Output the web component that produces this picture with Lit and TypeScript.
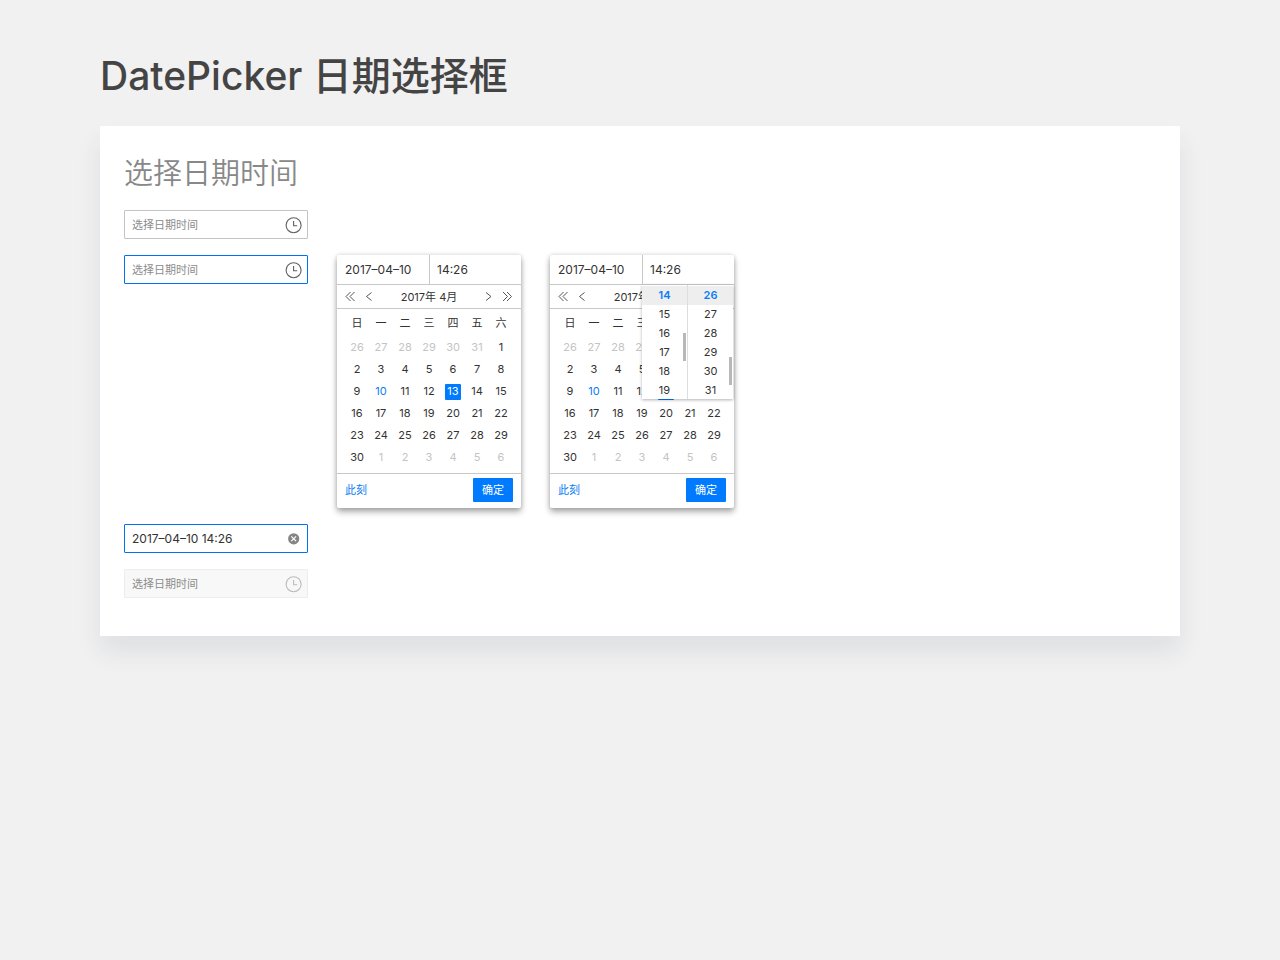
import { LitElement, html, css, svg, nothing } from "lit";
import { customElement, property, state } from "lit/decorators.js";
import { classMap } from "lit/directives/class-map.js";

const WEEKDAYS = ["日", "一", "二", "三", "四", "五", "六"];

interface Day {
  value: number;
  outside: boolean;
}

/** Weeks of April 2017, padded with the neighbouring months. */
function buildWeeks(): Day[][] {
  const days: Day[] = [];
  for (let d = 26; d <= 31; d++) days.push({ value: d, outside: true });
  for (let d = 1; d <= 30; d++) days.push({ value: d, outside: false });
  for (let d = 1; days.length < 42; d++) days.push({ value: d, outside: true });
  return Array.from({ length: 6 }, (_, i) => days.slice(i * 7, i * 7 + 7));
}

const clockIcon = html`<svg class="clock" viewBox="0 0 18 18" aria-hidden="true">
  <circle cx="8.6" cy="9.2" r="7.5"></circle>
  <path d="M8.6 5V9.8H12.2"></path>
</svg>`;

const clearIcon = html`<svg class="clear" viewBox="0 0 12 12" aria-hidden="true">
  <circle cx="5.7" cy="5.8" r="5.6"></circle>
  <path d="M3.3 3.4L8.1 8.2M8.1 3.4L3.3 8.2"></path>
</svg>`;

const chevrons = {
  prevYear: svg`<path d="M5.5 1L1 5.5L5.5 10M9.5 1L5 5.5L9.5 10"></path>`,
  prev: svg`<path d="M7.5 1.5L2.5 5.5L7.5 9.5"></path>`,
  next: svg`<path d="M3 1.5L8 5.5L3 9.5"></path>`,
  nextYear: svg`<path d="M1 1L5.5 5.5L1 10M5 1L9.5 5.5L5 10"></path>`,
};

const base = css`
  *,
  *::before,
  *::after {
    box-sizing: border-box;
  }
  button,
  input {
    margin: 0;
    padding: 0;
    border: 0;
    outline: 0;
    background: none;
    font: inherit;
    color: inherit;
    min-width: 0;
  }
  button {
    cursor: pointer;
  }
`;

@customElement("date-field")
class DateField extends LitElement {
  @property() value = "";
  @property({ type: Boolean }) active = false;
  @property({ type: Boolean }) disabled = false;

  static styles = [
    base,
    css`
      :host {
        display: block;
      }
      .field {
        display: flex;
        align-items: center;
        height: 29px;
        padding: 0 4px 0 7px;
        border: 1px solid #c4c4c4;
        border-radius: 1px;
        background: #fff;
      }
      .field.active {
        border-color: #0070f5;
      }
      .field.disabled {
        border-color: #ededed;
        background: #f8f8f8;
      }
      .input {
        flex: 1;
        font-size: 12px;
        color: #333;
      }
      .input::placeholder {
        font-size: 11px;
        color: #8c8c8c;
        opacity: 1;
      }
      .icon {
        display: flex;
        justify-content: center;
        width: 18px;
      }
      .clock {
        width: 18px;
        height: 18px;
        fill: none;
        stroke: #606060;
        stroke-width: 1.1;
      }
      .disabled .clock {
        stroke: #bcbcbc;
      }
      .clear {
        width: 12px;
        height: 12px;
        fill: #858585;
      }
      .clear path {
        stroke: #fff;
        stroke-width: 1.2;
      }
    `,
  ];

  private clear() {
    this.value = "";
  }

  render() {
    return html`<div class=${classMap({ field: true, active: this.active, disabled: this.disabled })}>
      <input
        class="input"
        type="text"
        aria-label="选择日期时间"
        placeholder="选择日期时间"
        .value=${this.value}
        ?disabled=${this.disabled}
      />
      ${this.value
        ? html`<button class="icon" type="button" aria-label="清除" @click=${this.clear}>${clearIcon}</button>`
        : html`<span class="icon">${clockIcon}</span>`}
    </div>`;
  }
}

@customElement("date-panel")
class DatePanel extends LitElement {
  @property({ type: Boolean }) timeopen = false;
  @state() private selected = 13;

  private weeks = buildWeeks();

  static styles = [
    base,
    css`
      :host {
        display: block;
      }
      .panel {
        position: relative;
        border-radius: 2px;
        background: #fff;
        color: #333;
        box-shadow: 0 4px 6px rgba(0, 0, 0, 0.32), 0 0 4px rgba(0, 0, 0, 0.16);
      }
      .values {
        display: grid;
        grid-template-columns: 1fr 1fr;
        height: 30px;
        border-bottom: 1px solid #c8c8c8;
        font-size: 12px;
      }
      .value {
        padding: 0 0 0 8px;
      }
      .value + .value {
        border-left: 1px solid #c8c8c8;
        padding-left: 7px;
      }
      .nav {
        display: flex;
        align-items: center;
        height: 24px;
        padding: 0 8px;
        gap: 8px;
        border-bottom: 1px solid #c8c8c8;
      }
      .month {
        flex: 1;
        text-align: center;
      }
      .arrow {
        display: flex;
      }
      .chevron {
        width: 11px;
        height: 11px;
        fill: none;
        stroke: #555;
      }
      .calendar {
        width: 168px;
        margin: 2px auto 5px;
        border-collapse: collapse;
        table-layout: fixed;
        text-align: center;
      }
      .calendar th,
      .calendar td {
        height: 22px;
        padding: 0;
        font-weight: 400;
      }
      .calendar thead th {
        height: 25px;
        padding-bottom: 1px;
      }
      .day {
        width: 16px;
        height: 16px;
        padding-bottom: 2px;
        border-radius: 1px;
        line-height: 14px;
        vertical-align: middle;
        white-space: nowrap;
      }
      .day.outside {
        color: #c4c4c4;
      }
      .day.today {
        color: #0a7cf5;
      }
      .day.selected {
        background: #007aff;
        color: #fff;
      }
      .footer {
        display: flex;
        align-items: center;
        justify-content: space-between;
        height: 35px;
        padding: 0 8px 2px;
        border-top: 1px solid #c8c8c8;
      }
      .now {
        color: #0a7cf5;
      }
      .ok {
        width: 40px;
        height: 24px;
        border-radius: 1px;
        background: #007aff;
        color: #fff;
      }
      .times {
        position: absolute;
        top: 30px;
        right: 1px;
        display: grid;
        grid-template-columns: 45px 46px;
        height: 114px;
        background: #fff;
        box-shadow: 0 1px 3px rgba(0, 0, 0, 0.3);
      }
      .column {
        position: relative;
        display: grid;
        align-content: start;
        padding-top: 1px;
        overflow: hidden;
      }
      .column + .column {
        border-left: 1px solid #ddd;
      }
      .time {
        height: 19px;
        line-height: 19px;
      }
      .time.current {
        background: #eee;
        color: #0a7cf5;
        font-weight: 600;
      }
      .thumb {
        position: absolute;
        right: 1px;
        width: 3px;
        height: 28px;
        background: #b8b8b8;
      }
      .hours .thumb {
        top: 48px;
      }
      .minutes .thumb {
        top: 72px;
      }
    `,
  ];

  private arrow(label: string, shape: unknown) {
    return html`<button class="arrow" type="button" aria-label=${label}>
      <svg class="chevron" viewBox="0 0 11 11" aria-hidden="true">${shape}</svg>
    </button>`;
  }

  private day(day: Day) {
    const classes = {
      day: true,
      outside: day.outside,
      today: !day.outside && day.value === 10,
      selected: !day.outside && day.value === this.selected,
    };
    return html`<td>
      <button
        type="button"
        class=${classMap(classes)}
        @click=${() => {
          if (!day.outside) this.selected = day.value;
        }}
      >${day.value}</button>
    </td>`;
  }

  private column(name: string, label: string, start: number) {
    const items = Array.from({ length: 6 }, (_, i) => start + i);
    return html`<div class="column ${name}" role="group" aria-label=${label}>
      ${items.map(
        (n, i) => html`<button type="button" class=${classMap({ time: true, current: i === 0 })}>${n}</button>`
      )}
      <span class="thumb"></span>
    </div>`;
  }

  render() {
    return html`<div class="panel">
      <div class="values">
        <input class="value" type="text" aria-label="日期" .value=${"2017–04–10"} />
        <input class="value" type="text" aria-label="时间" .value=${"14:26"} />
      </div>
      <div class="nav">
        ${this.arrow("上一年", chevrons.prevYear)} ${this.arrow("上个月", chevrons.prev)}
        <span class="month">2017年 4月</span>
        ${this.arrow("下个月", chevrons.next)} ${this.arrow("下一年", chevrons.nextYear)}
      </div>
      <table class="calendar">
        <thead>
          <tr>
            ${WEEKDAYS.map((d) => html`<th scope="col">${d}</th>`)}
          </tr>
        </thead>
        <tbody>
          ${this.weeks.map((week) => html`<tr>${week.map((d) => this.day(d))}</tr>`)}
        </tbody>
      </table>
      <div class="footer">
        <button class="now" type="button">此刻</button>
        <button class="ok" type="button">确定</button>
      </div>
      ${this.timeopen
        ? html`<div class="times">${this.column("hours", "时", 14)}${this.column("minutes", "分", 26)}</div>`
        : nothing}
    </div>`;
  }
}

@customElement("app-root")
class AppRoot extends LitElement {
  static styles = [
    base,
    css`
      :host {
        display: block;
        box-sizing: border-box;
        min-height: 100vh;
        padding: 46px 100px;
        background: #f1f1f1;
        font-family: Inter, "Noto Sans CJK SC", sans-serif;
        font-size: 11px;
        line-height: 16px;
        color: #333;
      }
      .title {
        margin: 0 0 20px;
        font-size: 39px;
        font-weight: 500;
        line-height: 60px;
        color: #444;
      }
      .card {
        padding: 24px 24px 38px;
        background: #fff;
        box-shadow: 0 16px 24px rgba(40, 50, 85, 0.09);
      }
      .subtitle {
        margin: 0 0 12px;
        font-size: 29px;
        font-weight: 350;
        line-height: 48px;
        color: #888;
      }
      .demo {
        display: grid;
        gap: 16px;
      }
      .row {
        display: flex;
        align-items: flex-start;
        gap: 29px;
      }
      .entry,
      .popup {
        width: 184px;
      }
    `,
  ];

  render() {
    return html`<main>
      <h1 class="title">DatePicker 日期选择框</h1>
      <section class="card">
        <h2 class="subtitle">选择日期时间</h2>
        <div class="demo">
          <div class="row"><date-field class="entry"></date-field></div>
          <div class="row">
            <date-field class="entry" active></date-field>
            <date-panel class="popup"></date-panel>
            <date-panel class="popup" timeopen></date-panel>
          </div>
          <div class="row"><date-field class="entry" active value="2017–04–10 14:26"></date-field></div>
          <div class="row"><date-field class="entry" disabled></date-field></div>
        </div>
      </section>
    </main>`;
  }
}
